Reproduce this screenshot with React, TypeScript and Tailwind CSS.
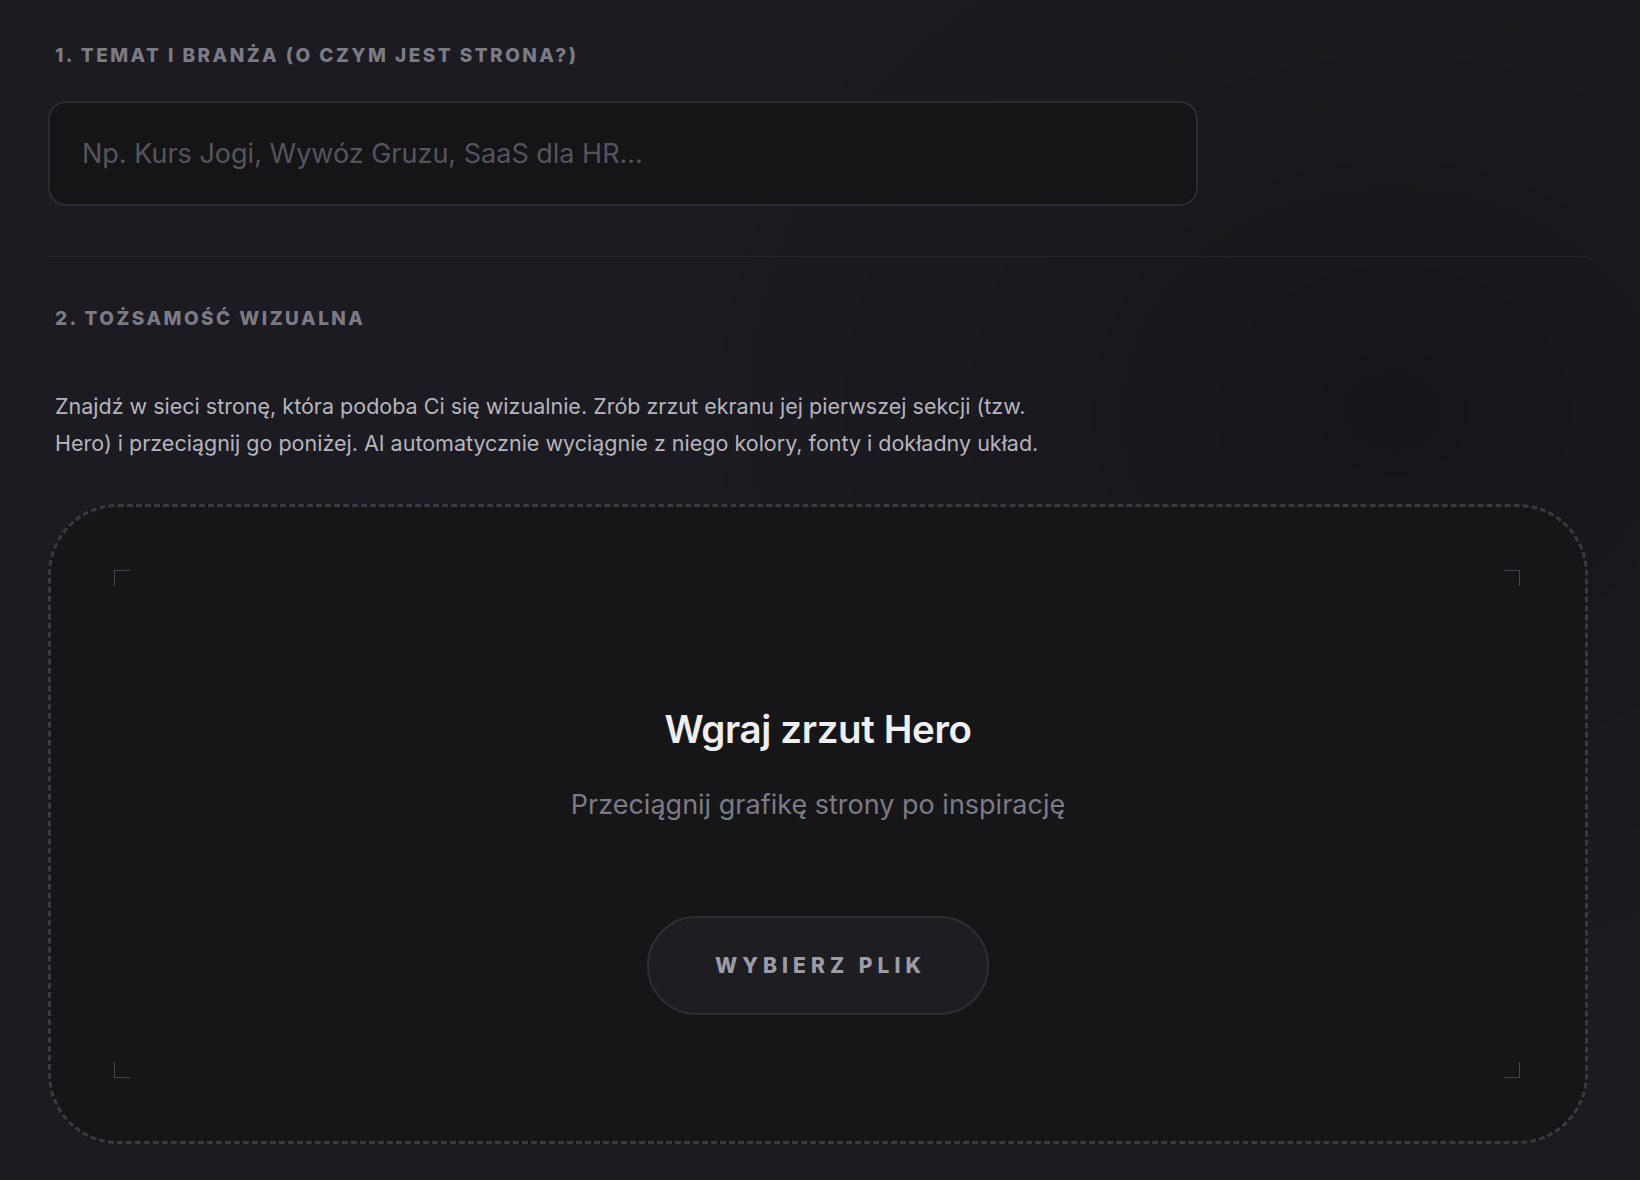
import React from 'react';

const FONT = { fontFamily: 'Inter, "Noto Sans", sans-serif' };

function SectionLabel({ children }: { children: React.ReactNode }) {
  return (
    <h2 className="pl-[7px] text-[19px] font-extrabold uppercase leading-6 tracking-[0.13em] text-[#7b7a85]">
      {children}
    </h2>
  );
}

function Corner({ pos }: { pos: 'tl' | 'tr' | 'bl' | 'br' }) {
  const cls = {
    tl: 'top-[63px] left-[63px] border-t border-l',
    tr: 'top-[63px] right-[65px] border-t border-r',
    bl: 'bottom-[63px] left-[63px] border-b border-l',
    br: 'bottom-[63px] right-[65px] border-b border-r',
  }[pos];
  return <span className={`absolute h-4 w-4 border-[#45444b] ${cls}`} />;
}

export default function App() {
  return (
    <div
      style={FONT}
      className="relative min-h-[1180px] w-full overflow-hidden bg-[#1c1b21] antialiased"
    >
      {/* soft dark vignette on the right */}
      <div className="pointer-events-none absolute inset-0 bg-[radial-gradient(ellipse_60%_70%_at_85%_35%,rgba(0,0,0,0.22),transparent_75%)]" />

      <div className="relative pl-12 pr-[52px] pt-[44px]">
        <SectionLabel>1. Temat i branża (o czym jest strona?)</SectionLabel>

        <input
          type="text"
          placeholder="Np. Kurs Jogi, Wywóz Gruzu, SaaS dla HR..."
          className="mt-[33px] block h-[105px] w-[1150px] rounded-[18px] border-2 border-[#2c2b31] bg-[#151518] px-8 text-[27px] text-[#d8d8de] outline-none placeholder:text-[#55545c]"
        />

        <div className="mt-[50px] h-px w-full bg-[#26252b]" />

        <div className="mt-[50px]">
          <SectionLabel>2. Tożsamość wizualna</SectionLabel>
        </div>

        <p className="mt-[57px] max-w-[1010px] pl-[7px] text-[21.5px] leading-[37px] text-[#b5b4bd]">
          Znajdź w sieci stronę, która podoba Ci się wizualnie. Zrób zrzut ekranu jej pierwszej
          sekcji (tzw. Hero) i przeciągnij go poniżej. AI automatycznie wyciągnie z niego kolory,
          fonty i dokładny układ.
        </p>

        <div className="relative mt-[42px] flex h-[640px] flex-col items-center rounded-[70px] border-[3px] border-dashed border-[#3a393f] bg-[#161619] pt-[199px]">
          <Corner pos="tl" />
          <Corner pos="tr" />
          <Corner pos="bl" />
          <Corner pos="br" />

          <h3 className="text-[38.5px] font-semibold leading-[46px] tracking-[-0.01em] text-[#efeff1]">
            Wgraj zrzut Hero
          </h3>
          <p className="mt-[37px] text-[27px] leading-8 text-[#7c7b85]">
            Przeciągnij grafikę strony po inspirację
          </p>
          <button
            type="button"
            className="mt-[95px] flex h-[99px] w-[342px] items-center justify-center rounded-full border-2 border-[#2f2e34] bg-[#1e1d22] pl-[5px] text-[21px] font-extrabold uppercase tracking-[0.24em] text-[#9d9ca6]"
          >
            Wybierz plik
          </button>
        </div>
      </div>
    </div>
  );
}
